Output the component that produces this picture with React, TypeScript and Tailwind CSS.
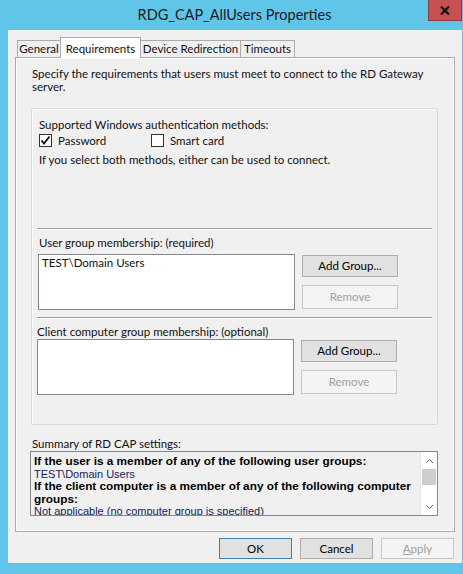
const font = "font-['Lato','Liberation_Sans',Arial,sans-serif]";

function Btn({ label, disabled, primary }: { label: React.ReactNode; disabled?: boolean; primary?: boolean }) {
  return (
    <div
      className={
        "flex-1 flex items-center justify-center border " +
        (disabled
          ? "bg-[#f4f4f4] border-[#c6c6c6] text-[#a0a0a0]"
          : primary
          ? "bg-[#e1e1e1] border-[#3c7fb1] text-black"
          : "bg-[#e1e1e1] border-[#adadad] text-black")
      }
    >
      {label}
    </div>
  );
}

function CheckBox({ checked }: { checked?: boolean }) {
  return (
    <div className="w-[13px] h-[13px] border border-[#333] bg-white flex items-center justify-center">
      {checked && (
        <svg width="11" height="11" viewBox="0 0 11 11">
          <path d="M1.5 5.5 L4 8.5 L9.5 1.5" fill="none" stroke="#111" strokeWidth="1.8" />
        </svg>
      )}
    </div>
  );
}

function GroupSection({
  label,
  items,
  labelPl,
  boxPl,
  gap,
}: {
  label: string;
  items: string[];
  labelPl: string;
  boxPl: string;
  gap: string;
}) {
  return (
    <div className="flex flex-col pt-[6px]">
      <div className={"h-[13px] leading-[13px] " + labelPl}>{label}</div>
      <div className={"flex " + boxPl + " " + gap}>
        <div className="w-[257px] h-[56px] border border-[#828790] bg-white px-[3px] leading-[16px]">
          {items.map((t) => (
            <div key={t}>{t}</div>
          ))}
        </div>
        <div className="ml-[7px] flex flex-col gap-[8px] pt-px">
          <div className="w-[96px] h-[22px] flex">
            <Btn label="Add Group..." />
          </div>
          <div className="w-[96px] h-[24px] flex">
            <Btn label="Remove" disabled />
          </div>
        </div>
      </div>
    </div>
  );
}

export default function App() {
  return (
    <div className={"w-[463px] h-[574px] bg-[#5fc6ea] flex flex-col text-[#111] text-[11.5px] " + font}>
      {/* title bar */}
      <div className="h-[30px] flex shrink-0">
        <div className="flex-1 pl-[41px] text-center text-[14.5px] leading-[30px] text-[#1a1a1a]">
          RDG_CAP_AllUsers Properties
        </div>
        <div className="w-[34px] h-[21px] mr-px bg-[#c75050] border border-t-0 border-[#8e3a3a] flex items-center justify-center">
          <svg width="10" height="9" viewBox="0 0 10 9">
            <path d="M1 0.5 L9 8.5 M9 0.5 L1 8.5" stroke="#111" strokeWidth="2.2" />
          </svg>
        </div>
      </div>

      {/* dialog body */}
      <div className="ml-[8px] mr-px h-[533px] bg-[#f0f0f0] flex flex-col shrink-0">
        {/* tabs */}
        <div className="flex items-end h-[27px] pl-[9px]">
          <div className="h-[17px] w-[44px] border border-b-0 border-[#acacac] bg-[#f0f0f0] flex items-center justify-center">
            General
          </div>
          <div className="h-[21px] w-[81px] -mx-px z-10 border border-b-0 border-[#acacac] bg-white flex items-start justify-center pt-[2px] -mb-px">
            Requirements
          </div>
          <div className="h-[17px] w-[101px] border border-b-0 border-[#acacac] bg-[#f0f0f0] flex items-center justify-center whitespace-nowrap">
            Device Redirection
          </div>
          <div className="h-[17px] w-[55px] -ml-px border border-b-0 border-[#acacac] bg-[#f0f0f0] flex items-center justify-center">
            Timeouts
          </div>
        </div>

        {/* tab panel */}
        <div className="ml-[7px] w-[440px] h-[475px] border border-[#acacac] bg-white p-px">
          <div className="w-full h-full bg-[#f0f0f0] flex flex-col">
            <div className="pl-[15px] pt-[8px] leading-[13px] w-[420px]">
              Specify the requirements that users must meet to connect to the RD Gateway server.
            </div>

            {/* group box */}
            <div className="ml-[14px] mt-[15px] w-[407px] h-[317px] border border-[#d9d9d9] rounded-[2px] shadow-[inset_1px_1px_0_#fff] flex flex-col">
              <div className="pl-[7px] pt-[9px] leading-[13px]">Supported Windows authentication methods:</div>
              <div className="flex items-center pl-[7px] mt-[3px] h-[13px]">
                <CheckBox checked />
                <span className="ml-[6px] w-[93px]">Password</span>
                <CheckBox />
                <span className="ml-[6px]">Smart card</span>
              </div>
              <div className="pl-[7px] mt-[6px] leading-[13px]">
                If you select both methods, either can be used to connect.
              </div>

              <div className="ml-[5px] mt-[62px] w-[395px] h-[2px] border-t border-[#a0a0a0] border-b border-b-white" />
              <GroupSection
                label="User group membership: (required)"
                items={["TEST\\Domain Users"]}
                labelPl="pl-[7px]"
                boxPl="pl-[6px]"
                gap="mt-[5px]"
              />
              <div className="ml-[5px] mt-[7px] w-[395px] h-[2px] border-t border-[#a0a0a0] border-b border-b-white" />
              <GroupSection
                label="Client computer group membership: (optional)"
                items={[]}
                labelPl="pl-[5px]"
                boxPl="pl-[5px]"
                gap="mt-[1px]"
              />
            </div>

            <div className="pl-[15px] mt-[12px] leading-[13px]">Summary of RD CAP settings:</div>
            <div className="ml-[13px] mt-[1px] w-[408px] h-[65px] border border-[#828790] bg-[#f0f0f0] flex font-['Liberation_Sans',Arial,sans-serif]">
              <div className="flex-1 overflow-hidden pl-[3px] pt-[3px] text-[11px] leading-[12.6px] text-black">
                <div className="font-bold text-[11.8px]">If the user is a member of any of the following user groups:</div>
                <div className="text-[#1a1a5a]">TEST\Domain Users</div>
                <div className="font-bold text-[11.8px]">If the client computer is a member of any of the following computer groups:</div>
                <div className="text-[#1a1a5a]">Not applicable (no computer group is specified)</div>
              </div>
              <div className="w-[17px] bg-white flex flex-col border-l border-[#e6e6e6]">
                <div className="h-[17px] flex items-center justify-center">
                  <svg width="9" height="6" viewBox="0 0 9 6">
                    <path d="M1 5 L4.5 1.5 L8 5" fill="none" stroke="#606060" strokeWidth="1" />
                  </svg>
                </div>
                <div className="h-[16px] bg-[#cdcdcd] mx-px" />
                <div className="flex-1" />
                <div className="h-[17px] flex items-center justify-center">
                  <svg width="9" height="6" viewBox="0 0 9 6">
                    <path d="M1 1 L4.5 4.5 L8 1" fill="none" stroke="#606060" strokeWidth="1" />
                  </svg>
                </div>
              </div>
            </div>
          </div>
        </div>

        {/* buttons */}
        <div className="flex justify-end gap-[8px] pr-[8px] mt-[6px]">
          <div className="w-[73px] h-[21px] flex"><Btn label="OK" primary /></div>
          <div className="w-[73px] h-[21px] flex"><Btn label="Cancel" /></div>
          <div className="w-[73px] h-[21px] flex">
            <Btn label={<span><span className="underline">A</span>pply</span>} disabled />
          </div>
        </div>
      </div>
    </div>
  );
}
